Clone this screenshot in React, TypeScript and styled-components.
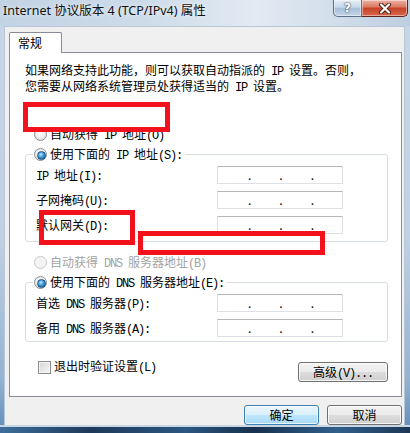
import React from "react";
import styled, { createGlobalStyle } from "styled-components";

const Global = createGlobalStyle`
  * { box-sizing: border-box; }
  html, body { margin: 0; padding: 0; background: #ffffff; }
  body { width: 410px; height: 433px; overflow: hidden; }
  #root { width: 410px; height: 433px; }
`;

const CJK = `"Noto Sans CJK SC", "Noto Sans", sans-serif`;

const Window = styled.div`
  position: relative;
  width: 410px;
  height: 433px;
  display: flex;
  flex-direction: column;
  overflow: hidden;
  font-family: ${CJK};
  font-size: 12px;
  color: #000;
  background: linear-gradient(180deg, #c8d7e7 0%, #c0d1e3 55%, #93b2d1 88%, #5e8bb8 100%);
`;

const TitleBar = styled.div`
  flex: none;
  height: 26px;
  display: flex;
  justify-content: space-between;
  align-items: flex-start;
  padding: 0 2px 0 3px;
  background: linear-gradient(90deg, #c2d3e4 0%, #cddbe9 35%, #e2eaf3 62%, #d3dfeb 80%, #bccee1 100%);
`;

const Title = styled.div`
  padding-top: 3px;
  line-height: 15px;
  font-family: "Noto Sans", "Noto Sans CJK SC", sans-serif;
  font-size: 12.5px;
  color: #111;
  white-space: nowrap;
  text-shadow: 0 0 5px rgba(255, 255, 255, 0.95);
`;

const Captions = styled.div`
  display: flex;
  height: 17px;
`;

const CapBtn = styled.div<{ $kind: "help" | "close" }>`
  height: 17px;
  width: ${(p) => (p.$kind === "help" ? 29 : 46)}px;
  display: flex;
  align-items: center;
  justify-content: center;
  border: 1px solid ${(p) => (p.$kind === "help" ? "#5a7089" : "#5c261c")};
  border-top: none;
  border-left-width: ${(p) => (p.$kind === "help" ? 1 : 0)}px;
  border-radius: ${(p) => (p.$kind === "help" ? "0 0 0 5px" : "0 0 5px 0")};
  background: ${(p) =>
    p.$kind === "help"
      ? "linear-gradient(180deg, #e6eef6 0%, #c9d9ea 45%, #a8bfd8 52%, #c2d5e9 100%)"
      : "linear-gradient(180deg, #eeb2a3 0%, #db7b63 42%, #c6432a 52%, #d8674b 100%)"};
  box-shadow: inset 0 0 0 1px rgba(255, 255, 255, 0.45);
`;

const HelpGlyph = styled.span`
  font-family: "DejaVu Sans", sans-serif;
  font-weight: bold;
  font-size: 12px;
  line-height: 12px;
  color: #fff;
  text-shadow: 0 0 2px #2b3d52, 0 0 1px #2b3d52;
`;

const Client = styled.div`
  flex: 1;
  margin: 0 5px 0 4px;
  background: #f0f0f0;
  border: 1px solid #b7c7d8;
  border-bottom: none;
  padding: 5px 2px 0 4px;
  display: flex;
  flex-direction: column;
`;

const TabStrip = styled.div`
  display: flex;
`;

const Tab = styled.div`
  position: relative;
  z-index: 1;
  width: 53px;
  height: 21px;
  margin-bottom: -1px;
  padding-left: 8px;
  line-height: 20px;
  background: #fff;
  border: 1px solid #898c95;
  border-bottom: none;
  border-radius: 2px 2px 0 0;
`;

const Panel = styled.div`
  background: #fff;
  border: 1px solid #898c95;
  padding: 10px 13px 14px 15px;
  display: flex;
  flex-direction: column;
`;

const Desc = styled.div`
  line-height: 14px;
  white-space: nowrap;
`;

const L = styled.span`
  font-family: "Liberation Mono", monospace;
  font-size: 12px;
  letter-spacing: -1.2px;
  white-space: pre;
`;

const RadioRow = styled.div<{ $disabled?: boolean; $top?: number }>`
  display: flex;
  align-items: center;
  gap: 3px;
  height: 20px;
  margin-top: ${(p) => p.$top ?? 0}px;
  padding-left: 9px;
  white-space: nowrap;
  color: ${(p) => (p.$disabled ? "#a3a3a3" : "#000")};
`;

const Radio = styled.span<{ $checked?: boolean; $disabled?: boolean }>`
  position: relative;
  flex: none;
  width: 13px;
  height: 13px;
  border-radius: 50%;
  border: 1px solid ${(p) => (p.$disabled ? "#c9c9c9" : "#8b8c8c")};
  background: ${(p) =>
    p.$disabled
      ? "#f4f4f4"
      : "radial-gradient(circle at 50% 35%, #ffffff 0%, #f1f1f1 45%, #d3d3d3 100%)"};
  &::after {
    content: "";
    display: ${(p) => (p.$checked ? "block" : "none")};
    position: absolute;
    left: 2px;
    top: 2px;
    width: 7px;
    height: 7px;
    border-radius: 50%;
    border: 1px solid #1c5180;
    background: radial-gradient(circle at 40% 35%, #bfe7fb 0%, #3f9ad8 45%, #0d4f8e 100%);
  }
`;

const Group = styled.div<{ $top: number; $bottom: number }>`
  margin-top: ${(p) => p.$top}px;
  border: 1px solid #d5dfe5;
  border-radius: 3px;
  padding: 0 44px ${(p) => p.$bottom}px 10px;
  display: flex;
  flex-direction: column;
  gap: 7px;
`;

const Legend = styled.div`
  display: flex;
  align-items: center;
  gap: 3px;
  width: fit-content;
  height: 20px;
  margin: -11px 0 -5px -3px;
  padding: 0 3px 0 1px;
  background: #fff;
  white-space: nowrap;
`;

const FieldRow = styled.div`
  display: flex;
  justify-content: space-between;
  align-items: center;
  height: 18px;
  white-space: nowrap;
`;

const IpBox = styled.div`
  width: 126px;
  height: 18px;
  display: flex;
  align-items: center;
  padding-left: 2px;
  background: #fff;
  border: 1px solid #dde1e7;
  border-top-color: #b3b6bd;
  line-height: 16px;
`;

const Seg = styled.span`
  flex: 1;
`;

const Dot = styled.span`
  flex: none;
  color: #000;
`;

const BottomRow = styled.div`
  display: flex;
  justify-content: space-between;
  align-items: flex-start;
  margin-top: 20px;
`;

const CheckLabel = styled.div`
  display: flex;
  align-items: center;
  gap: 3px;
  height: 14px;
  margin-top: -2px;
  padding-left: 13px;
  line-height: 14px;
  white-space: nowrap;
`;

const CheckBox = styled.span`
  flex: none;
  width: 13px;
  height: 13px;
  border: 1px solid #8b8c8c;
  background: linear-gradient(135deg, #d2d2d2 0%, #e6e6e6 50%, #f6f6f6 100%);
  box-shadow: inset 0 0 0 1px #f4f4f4;
`;

const Btn = styled.button<{ $w: number; $primary?: boolean }>`
  width: ${(p) => p.$w}px;
  height: 20px;
  padding: 0;
  margin: 0;
  font-family: ${CJK};
  font-size: 12px;
  line-height: 18px;
  color: #000;
  border-radius: 3px;
  border: 1px solid ${(p) => (p.$primary ? "#3c7fb1" : "#707070")};
  background: ${(p) =>
    p.$primary
      ? "linear-gradient(180deg, #eaf6fd 0%, #d9f0fc 48%, #bee6fd 52%, #a7d9f5 100%)"
      : "linear-gradient(180deg, #f2f2f2 0%, #ebebeb 48%, #dddddd 52%, #cfcfcf 100%)"};
  box-shadow: inset 0 0 0 1px ${(p) => (p.$primary ? "rgba(255,255,255,0.75)" : "rgba(255,255,255,0.8)")};
  white-space: nowrap;
`;

const DialogButtons = styled.div`
  display: flex;
  justify-content: flex-end;
  gap: 8px;
  margin-top: 8px;
`;

const BottomEdge = styled.div`
  flex: none;
  height: 8px;
  border-top: 2px solid #c9d7e5;
  background: linear-gradient(90deg, #3e6f9d 0%, #1d3a5a 22%, #2b5781 45%, #17314e 62%, #30608c 82%, #1c3756 100%);
`;

const Mark = styled.div<{ $x: number; $y: number; $w: number; $h: number }>`
  position: absolute;
  left: ${(p) => p.$x}px;
  top: ${(p) => p.$y}px;
  width: ${(p) => p.$w}px;
  height: ${(p) => p.$h}px;
  border: 5px solid #f3111b;
  pointer-events: none;
`;

const IpField = () => (
  <IpBox>
    <Seg />
    <Dot>.</Dot>
    <Seg />
    <Dot>.</Dot>
    <Seg />
    <Dot>.</Dot>
    <Seg />
  </IpBox>
);

export default function App() {
  return (
    <>
      <Global />
      <Window>
        <TitleBar>
          <Title>Internet 协议版本 4 (TCP/IPv4) 属性</Title>
          <Captions>
            <CapBtn $kind="help">
              <HelpGlyph>?</HelpGlyph>
            </CapBtn>
            <CapBtn $kind="close">
              <svg width="14" height="11" viewBox="0 0 14 11">
                <path d="M3 1.5 L11 9.5 M11 1.5 L3 9.5" stroke="#4a1a12" strokeWidth="4" strokeLinecap="round" />
                <path d="M3 1.5 L11 9.5 M11 1.5 L3 9.5" stroke="#ffffff" strokeWidth="2.2" strokeLinecap="round" />
              </svg>
            </CapBtn>
          </Captions>
        </TitleBar>

        <Client>
          <TabStrip>
            <Tab>常规</Tab>
          </TabStrip>
          <Panel>
            <Desc>
              <div>
                如果网络支持此功能，则可以获取自动指派的<L> IP </L>设置。否则，
              </div>
              <div>
                您需要从网络系统管理员处获得适当的<L> IP </L>设置。
              </div>
            </Desc>

            <RadioRow $top={29}>
              <Radio />
              <span>
                自动获得<L> IP </L>地址<L>(O)</L>
              </span>
            </RadioRow>

            <Group $top={10} $bottom={7}>
              <Legend>
                <Radio $checked />
                <span>
                  使用下面的<L> IP </L>地址<L>(S):</L>
                </span>
              </Legend>
              <FieldRow>
                <span>
                  <L>IP </L>地址<L>(I):</L>
                </span>
                <IpField />
              </FieldRow>
              <FieldRow>
                <span>
                  子网掩码<L>(U):</L>
                </span>
                <IpField />
              </FieldRow>
              <FieldRow>
                <span>
                  默认网关<L>(D):</L>
                </span>
                <IpField />
              </FieldRow>
            </Group>

            <RadioRow $top={10} $disabled>
              <Radio $disabled />
              <span>
                自动获得<L> DNS </L>服务器地址<L>(B)</L>
              </span>
            </RadioRow>

            <Group $top={10} $bottom={4}>
              <Legend>
                <Radio $checked />
                <span>
                  使用下面的<L> DNS </L>服务器地址<L>(E):</L>
                </span>
              </Legend>
              <FieldRow>
                <span>
                  首选<L> DNS </L>服务器<L>(P):</L>
                </span>
                <IpField />
              </FieldRow>
              <FieldRow>
                <span>
                  备用<L> DNS </L>服务器<L>(A):</L>
                </span>
                <IpField />
              </FieldRow>
            </Group>

            <BottomRow>
              <CheckLabel>
                <CheckBox />
                <span>
                  退出时验证设置<L>(L)</L>
                </span>
              </CheckLabel>
              <Btn $w={90}>
                高级<L>(V)...</L>
              </Btn>
            </BottomRow>
          </Panel>

          <DialogButtons>
            <Btn $w={75} $primary>
              确定
            </Btn>
            <Btn $w={75}>取消</Btn>
          </DialogButtons>
        </Client>

        <BottomEdge />

        <Mark $x={23} $y={102} $w={147} $h={30} />
        <Mark $x={39} $y={210} $w={96} $h={35} />
        <Mark $x={138} $y={231} $w={187} $h={24} />
      </Window>
    </>
  );
}
